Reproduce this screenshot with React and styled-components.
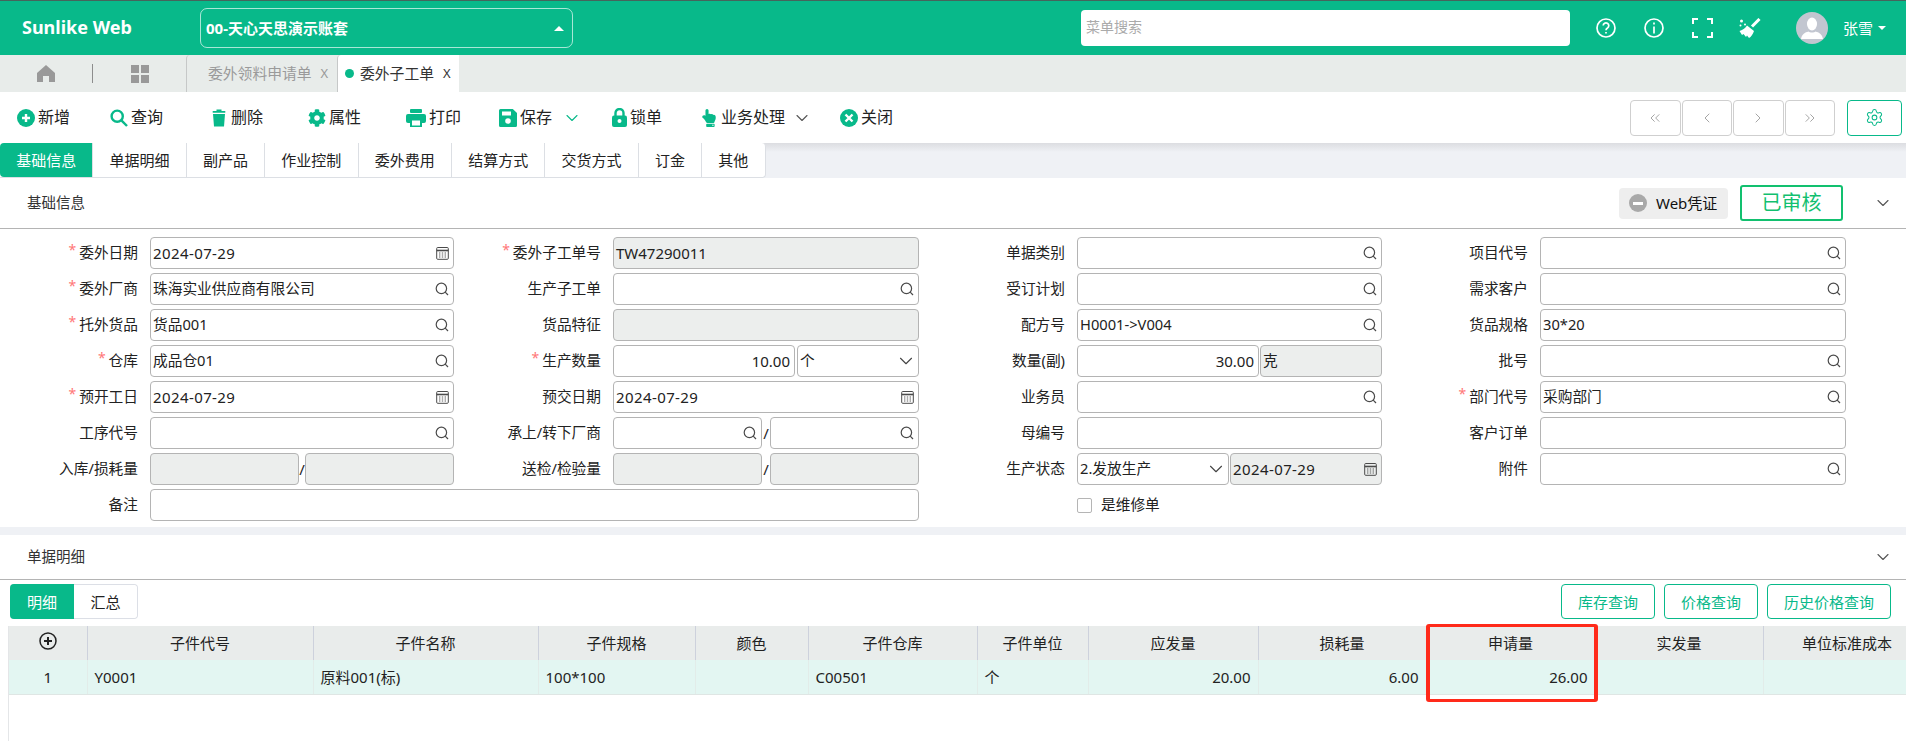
import React from 'react'
import styled, { createGlobalStyle } from 'styled-components'
import { FaCog, FaHandPointUp } from 'react-icons/fa'
import { ChevronDown, ChevronsLeft, ChevronLeft, ChevronRight, ChevronsRight, Settings } from 'lucide-react'

const GREEN = '#08b98a'
const FONT = `"Noto Sans", "Noto Sans CJK SC", sans-serif`

const GlobalStyle = createGlobalStyle`
  html, body {
    margin: 0;
    height: 100%;
    overflow: hidden;
    background: #fff;
  }
  * {
    box-sizing: border-box;
  }
  #root {
    width: 1906px;
    height: 741px;
    overflow: hidden;
    font-family: ${FONT};
    font-size: 15px;
    line-height: 1.2;
    color: #222;
  }
`

const Header = styled.header`
  height: 55px;
  border-top: 1px solid #45655c;
  background: ${GREEN};
  color: #fff;
  display: flex;
  align-items: center;
  position: relative;
`

const Logo = styled.div`
  width: 200px;
  padding-left: 22px;
  font-size: 18px;
  font-weight: 700;
`

const AccountSelect = styled.div`
  width: 373px;
  height: 40px;
  border: 1px solid rgba(255, 255, 255, 0.65);
  border-radius: 7px;
  padding: 0 8px 0 5px;
  display: flex;
  align-items: center;
  justify-content: space-between;
  font-size: 15px;
  font-weight: 700;
`

const CaretUp = styled.span`
  width: 0;
  height: 0;
  border-left: 5px solid transparent;
  border-right: 5px solid transparent;
  border-bottom: 5px solid #fff;
`

const CaretDown = styled.span`
  width: 0;
  height: 0;
  margin-left: 5px;
  border-left: 4px solid transparent;
  border-right: 4px solid transparent;
  border-top: 4px solid #fff;
`

const MenuSearch = styled.div`
  width: 489px;
  height: 36px;
  margin-left: 508px;
  margin-top: -1px;
  padding-left: 5px;
  background: #fff;
  border-radius: 4px;
  color: #aaa;
  font-size: 14px;
  display: flex;
  align-items: center;
`

const HeaderIcons = styled.div`
  display: flex;
  align-items: center;
  margin-left: 24px;
  gap: 24px;
`

const HeaderIcon = styled.span`
  width: 24px;
  height: 24px;
  display: flex;
  align-items: center;
  justify-content: center;
`

const Avatar = styled.span`
  width: 32px;
  height: 32px;
  margin-left: 34px;
  border-radius: 50%;
  background: #c2c6d0;
  display: flex;
  align-items: center;
  justify-content: center;
`

const UserName = styled.span`
  margin-left: 15px;
  font-size: 15px;
  display: flex;
  align-items: center;
`

const PageTabs = styled.nav`
  height: 37px;
  background: #e8ecea;
  display: flex;
  align-items: stretch;
`

const HomeCell = styled.div`
  width: 92px;
  display: flex;
  align-items: center;
  justify-content: center;
`

const GridCell = styled.div`
  width: 94px;
  margin: 9px 0;
  border-left: 1px solid #8d8d8d;
  display: flex;
  align-items: center;
  justify-content: center;
`

const PageTab = styled.div`
  border-left: 1px solid #c6c8c8;
  border-top-left-radius: 4px;
  background: ${({ $active }) => ($active ? '#fff' : 'transparent')};
  color: ${({ $active }) => ($active ? '#333' : '#9a9a9a')};
  width: ${({ $w }) => $w}px;
  padding-left: ${({ $active }) => ($active ? 7 : 21)}px;
  font-size: 14.8px;
  display: flex;
  align-items: center;
`

const TabDot = styled.span`
  width: 9px;
  height: 9px;
  margin-right: 6px;
  border-radius: 50%;
  background: ${GREEN};
`

const TabClose = styled.span`
  margin-left: 9px;
  font-size: 13px;
  color: ${({ $active }) => ($active ? '#333' : '#999')};
`

const Toolbar = styled.div`
  height: 51px;
  padding: 0 4px 0 17px;
  background: #fff;
  display: flex;
  align-items: center;
`

const ToolButton = styled.div`
  width: ${({ $w }) => $w}px;
  font-size: 16px;
  color: #222;
  display: flex;
  align-items: center;
  gap: 3px;
`

const MenuArrow = styled.span`
  margin-left: ${({ $gap }) => $gap}px;
  display: flex;
  color: ${({ $color }) => $color};
`

const Pager = styled.div`
  margin-left: auto;
  display: flex;
  gap: 1px;
`

const PagerButton = styled.div`
  width: 50.5px;
  height: 36px;
  border: 1px solid #cfcfcf;
  border-radius: 4px;
  color: #777;
  display: flex;
  align-items: center;
  justify-content: center;
`

const SettingsButton = styled.div`
  width: 55px;
  height: 36px;
  margin-left: 12px;
  border: 1px solid ${GREEN};
  border-radius: 4px;
  color: ${GREEN};
  display: flex;
  align-items: center;
  justify-content: center;
`

const SectionTabs = styled.div`
  height: 35px;
  background: linear-gradient(#dcdde1, #eff1f5 9px);
  display: flex;
`

const SectionTabGroup = styled.div`
  display: flex;
  background: #fff;
  border: 1px solid #dcdfe4;
  border-left: 0;
  border-top: 0;
  border-radius: 0 4px 4px 0;
`

const SectionTab = styled.div`
  padding: 0 16.2px;
  font-size: 15px;
  border-right: 1px solid #dcdfe4;
  display: flex;
  align-items: center;
  background: ${({ $active }) => ($active ? GREEN : 'transparent')};
  color: ${({ $active }) => ($active ? '#fff' : '#222')};
  border-radius: ${({ $active }) => ($active ? '4px 0 0 4px' : '0')};
  &:last-child {
    border-right: 0;
  }
`

const SectionHead = styled.div`
  height: ${({ $h }) => $h}px;
  padding: 0 13px 0 27px;
  border-bottom: 1px solid #b4b4b4;
  font-size: 14.5px;
  display: flex;
  align-items: center;
  color: #333;
`

const SectionActions = styled.div`
  margin-left: auto;
  display: flex;
  align-items: center;
`

const WebBadge = styled.div`
  width: 109px;
  height: 31px;
  padding-left: 10px;
  background: #eeeeee;
  border-radius: 4px;
  color: #111;
  font-size: 15px;
  display: flex;
  align-items: center;
  gap: 9px;
`

const MinusDot = styled.span`
  width: 18px;
  height: 18px;
  border-radius: 50%;
  background: #a9a9a9;
  display: flex;
  align-items: center;
  justify-content: center;
  &::after {
    content: '';
    width: 10px;
    height: 3px;
    background: #fff;
  }
`

const StatusStamp = styled.div`
  width: 103px;
  height: 36px;
  margin-left: 12px;
  margin-right: 30px;
  border: 2px solid #12c06f;
  border-radius: 3px;
  color: #12c06f;
  font-size: 20px;
  display: flex;
  align-items: center;
  justify-content: center;
`

const FormGrid = styled.div`
  padding: 8px 0 6px;
  display: grid;
  grid-template-columns: 138px 304px 135px 306px 134px 305px 134px 306px;
  grid-auto-rows: 32px;
  column-gap: 12px;
  row-gap: 4px;
`

const Label = styled.div`
  text-align: right;
  align-self: center;
  font-size: 14.7px;
  color: #222;
  white-space: nowrap;
`

const Star = styled.span`
  color: #f77;
  margin-right: 3px;
  font-size: 14px;
  position: relative;
  top: -3px;
`

const Control = styled.div`
  flex: ${({ $grow }) => $grow || 'none'};
  min-width: 0;
  height: 32px;
  padding: 0 4px 0 2px;
  border: 1px solid #b4b4b4;
  border-radius: 4px;
  background: ${({ $off }) => ($off ? '#eceeed' : '#fff')};
  grid-column: ${({ $span }) => ($span ? `span ${$span}` : 'auto')};
  font-size: 14.7px;
  color: #222;
  display: flex;
  align-items: center;
  justify-content: ${({ $end }) => ($end ? 'flex-end' : 'space-between')};
`

const Latin = styled.span`
  font-size: 15px;
  letter-spacing: ${({ $spaced }) => ($spaced ? '0.4px' : '0')};
`

const Pair = styled.div`
  display: flex;
  gap: ${({ $gap }) => $gap}px;
  align-items: center;
`

const Slash = styled.span`
  width: 6px;
  font-size: 15px;
  text-align: center;
`

const CheckRow = styled.div`
  display: flex;
  align-items: center;
  gap: 9px;
  font-size: 14.7px;
  grid-column: 6 / span 2;
`

const CheckBox = styled.span`
  width: 15px;
  height: 15px;
  border: 1px solid #b5b5b5;
  border-radius: 2px;
`

const SelectArrow = styled.span`
  display: flex;
  margin-right: -3px;
  color: #444;
`

const Gap = styled.div`
  height: 8px;
  background: #eff1f5;
`

const DetailBar = styled.div`
  height: 46px;
  padding: 4px 15px 7px 10px;
  display: flex;
  justify-content: space-between;
`

const Segmented = styled.div`
  display: flex;
  border: 1px solid #dcdfe6;
  border-left: 0;
  border-radius: 4px;
`

const Segment = styled.div`
  width: ${({ $w }) => $w}px;
  background: ${({ $active }) => ($active ? GREEN : '#fff')};
  color: ${({ $active }) => ($active ? '#fff' : '#222')};
  border-radius: ${({ $active }) => ($active ? '4px 0 0 4px' : '0 4px 4px 0')};
  margin: ${({ $active }) => ($active ? '-1px 0' : '0')};
  font-size: 15px;
  display: flex;
  align-items: center;
  justify-content: center;
`

const QueryGroup = styled.div`
  display: flex;
  gap: 9px;
`

const QueryButton = styled.div`
  padding: 0 16px;
  border: 1px solid ${GREEN};
  border-radius: 4px;
  color: ${GREEN};
  font-size: 15px;
  display: flex;
  align-items: center;
`

const TableWrap = styled.div`
  position: relative;
  margin-left: 8px;
  height: 115px;
  border-left: 1px solid #e4e6e8;
`

const Table = styled.table`
  width: 1922px;
  table-layout: fixed;
  border-collapse: collapse;
`

const Th = styled.th`
  height: 34px;
  padding: 0;
  background: #e9eceb;
  border-right: 1px solid #cdd1dc;
  font-size: 15px;
  font-weight: 400;
  color: #222;
  white-space: nowrap;
`

const AddRow = styled.svg`
  display: block;
  margin: 0 auto 5px;
`

const Td = styled.td`
  height: 34px;
  padding: 0 7px;
  background: #e3f6f2;
  border-right: 1px solid #e2ece9;
  border-bottom: 1px solid #dfe6e4;
  font-size: 15px;
  color: #222;
  text-align: ${({ $align }) => $align || 'left'};
  white-space: nowrap;
`

// red marker someone drew on the screenshot, sits over the table
const Highlight = styled.div`
  position: absolute;
  left: 1417px;
  top: -2px;
  width: 172px;
  height: 78px;
  border-style: solid;
  border-color: #ff2a1a;
  border-width: 3px 4px;
  border-radius: 3px;
  pointer-events: none;
`

const SearchIcon = () => (
  <svg width="14" height="14" viewBox="0 0 14 14" fill="none" stroke="#4a4a4a" strokeWidth="1.2">
    <circle cx="6.4" cy="6.4" r="5.2" />
    <path d="M10.2 10.2 13 13" />
  </svg>
)

const CalendarIcon = () => (
  <svg width="13" height="14" viewBox="0 0 13 14" fill="none" stroke="#4a4a4a">
    <rect x="0.7" y="1.5" width="11.6" height="11.8" rx="1" />
    <path d="M0.7 4.5h11.6" strokeWidth="1.6" />
    <path d="M3 7h1.400M5.800 7h1.400M8.600 7h1.400M3 9h1.400M5.800 9h1.400M8.600 9h1.400M3 11h1.400M5.800 11h1.400M8.600 11h1.400" strokeWidth="0.9" />
  </svg>
)

const PlusCircleIcon = () => (
  <svg width="18" height="18" viewBox="0 0 18 18">
    <circle cx="9" cy="9" r="9" fill={GREEN} />
    <path d="M9 5v8M5 9h8" stroke="#fff" strokeWidth="2.4" />
  </svg>
)

const LensIcon = () => (
  <svg width="18" height="18" viewBox="0 0 18 18" fill="none" stroke={GREEN} strokeWidth="2.4">
    <circle cx="7.2" cy="7.2" r="5.6" />
    <path d="M11.400 11.400 17 17" />
  </svg>
)

const TrashIcon = () => (
  <svg width="18" height="18" viewBox="0 0 18 18" fill={GREEN}>
    <path d="M6.500 0.500h5v1.600h3.800v1.600H2.700V2.100h3.800zM3 5h12l-1 12.500H4z" />
  </svg>
)

const PrintIcon = () => (
  <svg width="20" height="18" viewBox="0 0 20 18" fill={GREEN}>
    <rect x="4" width="12" height="4" rx="1" />
    <rect y="5" width="20" height="9" rx="2" />
    <rect x="4" y="10" width="12" height="8" />
    <rect x="6" y="11.500" width="8" height="5" fill="#fff" />
  </svg>
)

const SaveIcon = () => (
  <svg width="18" height="18" viewBox="0 0 18 18">
    <path fill={GREEN} d="M1.500 0h12.300L18 4v12.500a1.500 1.500 0 0 1-1.500 1.500h-15A1.500 1.500 0 0 1 0 16.500v-15A1.500 1.500 0 0 1 1.500 0z" />
    <rect x="3" y="2.500" width="9" height="4" fill="#fff" />
    <circle cx="9" cy="12" r="2.800" fill="#fff" />
  </svg>
)

const LockIcon = () => (
  <svg width="15" height="19" viewBox="0 0 15 19">
    <path d="M3.500 8V5a4 4 0 0 1 8 0v3" fill="none" stroke={GREEN} strokeWidth="2.400" />
    <rect y="7.500" width="15" height="11.500" rx="2" fill={GREEN} />
    <circle cx="7.500" cy="13" r="2" fill="#fff" />
  </svg>
)

const CloseCircleIcon = () => (
  <svg width="18" height="18" viewBox="0 0 18 18">
    <circle cx="9" cy="9" r="9" fill={GREEN} />
    <path d="M5.500 5.500l7 7M12.500 5.500l-7 7" stroke="#fff" strokeWidth="2.400" />
  </svg>
)

const HelpIcon = () => (
  <svg width="20" height="20" viewBox="0 0 20 20" fill="none" stroke="#fff" strokeWidth="1.7">
    <circle cx="10" cy="10" r="9" />
    <path d="M7.200 7.600a2.800 2.800 0 1 1 4.300 2.400c-1 .6-1.500 1.100-1.500 2.300" />
    <path d="M10 14v1.600" />
  </svg>
)

const InfoIcon = () => (
  <svg width="20" height="20" viewBox="0 0 20 20" fill="none" stroke="#fff" strokeWidth="1.7">
    <circle cx="10" cy="10" r="9" />
    <path d="M10 4.600v2M10 8.400v7" />
  </svg>
)

const FullscreenIcon = () => (
  <svg width="21" height="20" viewBox="0 0 21 20" fill="none" stroke="#fff" strokeWidth="2">
    <path d="M1 6V1h5M15 1h5v5M20 14v5h-5M6 19H1v-5" />
  </svg>
)

const BroomIcon = () => (
  <svg width="22" height="20" viewBox="0 0 22 20" fill="#fff">
    <path d="M20.500 1 13 8.500" stroke="#fff" strokeWidth="3" />
    <path d="M8 7.500 15 13c-1 3-3 6-5 7l-2-2.500L7 19l-2.500-3L3 17 .5 13C4 12 6.500 10 8 7.500z" />
    <circle cx="2.500" cy="3" r="1.500" />
    <circle cx="1.500" cy="7.500" r="1" />
    <circle cx="6" cy="6.500" r="1" />
  </svg>
)

const UserIcon = () => (
  <svg width="22" height="24" viewBox="0 0 22 24" fill="#fff">
    <ellipse cx="11" cy="8" rx="5" ry="6.400" />
    <path d="M0 23c1-5 4-6.600 7.500-7.500 1.200 1.400 5.800 1.400 7 0C18 16.400 21 18 22 23z" />
  </svg>
)

const HomeIcon = () => (
  <svg width="18" height="17" viewBox="0 0 18 17" fill="#999">
    <path d="M9 0 18 8v9h-6v-6H6v6H0V8z" />
  </svg>
)

const GridIcon = () => (
  <svg width="18" height="18" viewBox="0 0 18 18" fill="#999">
    <rect width="8" height="8" />
    <rect x="10" width="8" height="8" />
    <rect y="10" width="8" height="8" />
    <rect x="10" y="10" width="8" height="8" />
  </svg>
)

const Lookup = ({ value, grow }) => (
  <Control $grow={grow}>
    <span>{value}</span>
    <SearchIcon />
  </Control>
)

const DateBox = ({ value, off, grow }) => (
  <Control $off={off} $grow={grow}>
    <Latin $spaced>{value}</Latin>
    <CalendarIcon />
  </Control>
)

const Field = ({ label, required }) => (
  <Label>
    {required && <Star>*</Star>}
    {label}
  </Label>
)

const Arrow = () => (
  <SelectArrow><ChevronDown size={22} strokeWidth={1.2} /></SelectArrow>
)

const tools = [
  { label: '新增', w: 93, icon: <PlusCircleIcon /> },
  { label: '查询', w: 100, icon: <LensIcon /> },
  { label: '删除', w: 98, icon: <TrashIcon /> },
  { label: '属性', w: 98, icon: <FaCog size={18} color={GREEN} /> },
  { label: '打印', w: 93, icon: <PrintIcon /> },
  { label: '保存', w: 113, icon: <SaveIcon />, menu: GREEN, gap: 7 },
  { label: '锁单', w: 88, icon: <LockIcon /> },
  { label: '业务处理', w: 140, icon: <FaHandPointUp size={18} color={GREEN} />, menu: '#555', gap: 4 },
  { label: '关闭', w: 60, icon: <CloseCircleIcon /> },
]

const sectionTabs = ['基础信息', '单据明细', '副产品', '作业控制', '委外费用', '结算方式', '交货方式', '订金', '其他']

const columns = [
  { title: '', w: 78 },
  { title: '子件代号', w: 226, value: 'Y0001' },
  { title: '子件名称', w: 225, value: '原料001(标)' },
  { title: '子件规格', w: 157, value: '100*100' },
  { title: '颜色', w: 113 },
  { title: '子件仓库', w: 169, value: 'C00501' },
  { title: '子件单位', w: 111, value: '个' },
  { title: '应发量', w: 170, value: '20.00', align: 'right' },
  { title: '损耗量', w: 168, value: '6.00', align: 'right' },
  { title: '申请量', w: 169, value: '26.00', align: 'right' },
  { title: '实发量', w: 168 },
  { title: '单位标准成本', w: 168 },
]

export default function App() {
  return (
    <>
      <GlobalStyle />
      <Header>
        <Logo>Sunlike Web</Logo>
        <AccountSelect>
          <span>00-天心天思演示账套</span>
          <CaretUp />
        </AccountSelect>
        <MenuSearch>菜单搜索</MenuSearch>
        <HeaderIcons>
          <HeaderIcon><HelpIcon /></HeaderIcon>
          <HeaderIcon><InfoIcon /></HeaderIcon>
          <HeaderIcon><FullscreenIcon /></HeaderIcon>
          <HeaderIcon><BroomIcon /></HeaderIcon>
        </HeaderIcons>
        <Avatar><UserIcon /></Avatar>
        <UserName>张雪<CaretDown /></UserName>
      </Header>

      <PageTabs>
        <HomeCell><HomeIcon /></HomeCell>
        <GridCell><GridIcon /></GridCell>
        <PageTab $w={151}>委外领料申请单<TabClose>X</TabClose></PageTab>
        <PageTab $active $w={122}><TabDot />委外子工单<TabClose $active>X</TabClose></PageTab>
      </PageTabs>

      <Toolbar>
        {tools.map((t) => (
          <ToolButton key={t.label} $w={t.w}>
            {t.icon}
            {t.label}
            {t.menu && (
              <MenuArrow $gap={t.gap} $color={t.menu}>
                <ChevronDown size={20} strokeWidth={1.3} />
              </MenuArrow>
            )}
          </ToolButton>
        ))}
        <Pager>
          <PagerButton><ChevronsLeft size={16} strokeWidth={1} /></PagerButton>
          <PagerButton><ChevronLeft size={16} strokeWidth={1} /></PagerButton>
          <PagerButton><ChevronRight size={16} strokeWidth={1} /></PagerButton>
          <PagerButton><ChevronsRight size={16} strokeWidth={1} /></PagerButton>
        </Pager>
        <SettingsButton><Settings size={19} strokeWidth={1.3} /></SettingsButton>
      </Toolbar>

      <SectionTabs>
        <SectionTabGroup>
          {sectionTabs.map((t, i) => (
            <SectionTab key={t} $active={i === 0}>{t}</SectionTab>
          ))}
        </SectionTabGroup>
      </SectionTabs>

      <SectionHead $h={51}>
        基础信息
        <SectionActions>
          <WebBadge><MinusDot />Web凭证</WebBadge>
          <StatusStamp>已审核</StatusStamp>
          <ChevronDown size={20} strokeWidth={1.3} color="#555" />
        </SectionActions>
      </SectionHead>

      <FormGrid>
        <Field label="委外日期" required />
        <DateBox value="2024-07-29" />
        <Field label="委外子工单号" required />
        <Control $off><Latin>TW47290011</Latin></Control>
        <Field label="单据类别" />
        <Lookup />
        <Field label="项目代号" />
        <Lookup />

        <Field label="委外厂商" required />
        <Lookup value="珠海实业供应商有限公司" />
        <Field label="生产子工单" />
        <Lookup />
        <Field label="受订计划" />
        <Lookup />
        <Field label="需求客户" />
        <Lookup />

        <Field label="托外货品" required />
        <Lookup value="货品001" />
        <Field label="货品特征" />
        <Control $off />
        <Field label="配方号" />
        <Lookup value="H0001->V004" />
        <Field label="货品规格" />
        <Control>30*20</Control>

        <Field label="仓库" required />
        <Lookup value="成品仓01" />
        <Field label="生产数量" required />
        <Pair $gap={2}>
          <Control $grow="0 0 182px" $end><Latin>10.00</Latin></Control>
          <Control $grow={1}>个<Arrow /></Control>
        </Pair>
        <Field label="数量(副)" />
        <Pair $gap={1}>
          <Control $grow="0 0 182px" $end><Latin>30.00</Latin></Control>
          <Control $off $grow={1}>克</Control>
        </Pair>
        <Field label="批号" />
        <Lookup />

        <Field label="预开工日" required />
        <DateBox value="2024-07-29" />
        <Field label="预交日期" />
        <DateBox value="2024-07-29" />
        <Field label="业务员" />
        <Lookup />
        <Field label="部门代号" required />
        <Lookup value="采购部门" />

        <Field label="工序代号" />
        <Lookup />
        <Field label="承上/转下厂商" />
        <Pair $gap={1}>
          <Lookup grow={1} />
          <Slash>/</Slash>
          <Lookup grow={1} />
        </Pair>
        <Field label="母编号" />
        <Control />
        <Field label="客户订单" />
        <Control />

        <Field label="入库/损耗量" />
        <Pair $gap={0}>
          <Control $off $grow={1} />
          <Slash>/</Slash>
          <Control $off $grow={1} />
        </Pair>
        <Field label="送检/检验量" />
        <Pair $gap={1}>
          <Control $off $grow={1} />
          <Slash>/</Slash>
          <Control $off $grow={1} />
        </Pair>
        <Field label="生产状态" />
        <Pair $gap={1}>
          <Control $grow="0 0 152px">2.发放生产<Arrow /></Control>
          <DateBox off grow={1} value="2024-07-29" />
        </Pair>
        <Field label="附件" />
        <Lookup />

        <Field label="备注" />
        <Control $span={3} />
        <CheckRow><CheckBox />是维修单</CheckRow>
      </FormGrid>

      <Gap />
      <SectionHead $h={45}>
        单据明细
        <SectionActions>
          <ChevronDown size={20} strokeWidth={1.3} color="#555" />
        </SectionActions>
      </SectionHead>

      <DetailBar>
        <Segmented>
          <Segment $active $w={64}>明细</Segment>
          <Segment $w={63}>汇总</Segment>
        </Segmented>
        <QueryGroup>
          <QueryButton>库存查询</QueryButton>
          <QueryButton>价格查询</QueryButton>
          <QueryButton>历史价格查询</QueryButton>
        </QueryGroup>
      </DetailBar>

      <TableWrap>
        <Table>
          <colgroup>
            {columns.map((c, i) => <col key={i} width={c.w} />)}
          </colgroup>
          <thead>
            <tr>
              {columns.map((c, i) => (
                <Th key={i}>
                  {i === 0 ? (
                    <AddRow width="18" height="18" viewBox="0 0 18 18" fill="none" stroke="#222" strokeWidth="1.5">
                      <circle cx="9" cy="9" r="8" />
                      <path d="M9 5v8M5 9h8" strokeWidth="2" />
                    </AddRow>
                  ) : c.title}
                </Th>
              ))}
            </tr>
          </thead>
          <tbody>
            <tr>
              {columns.map((c, i) => (
                <Td key={i} $align={i === 0 ? 'center' : c.align}>{i === 0 ? 1 : c.value}</Td>
              ))}
            </tr>
          </tbody>
        </Table>
        <Highlight />
      </TableWrap>
    </>
  )
}
